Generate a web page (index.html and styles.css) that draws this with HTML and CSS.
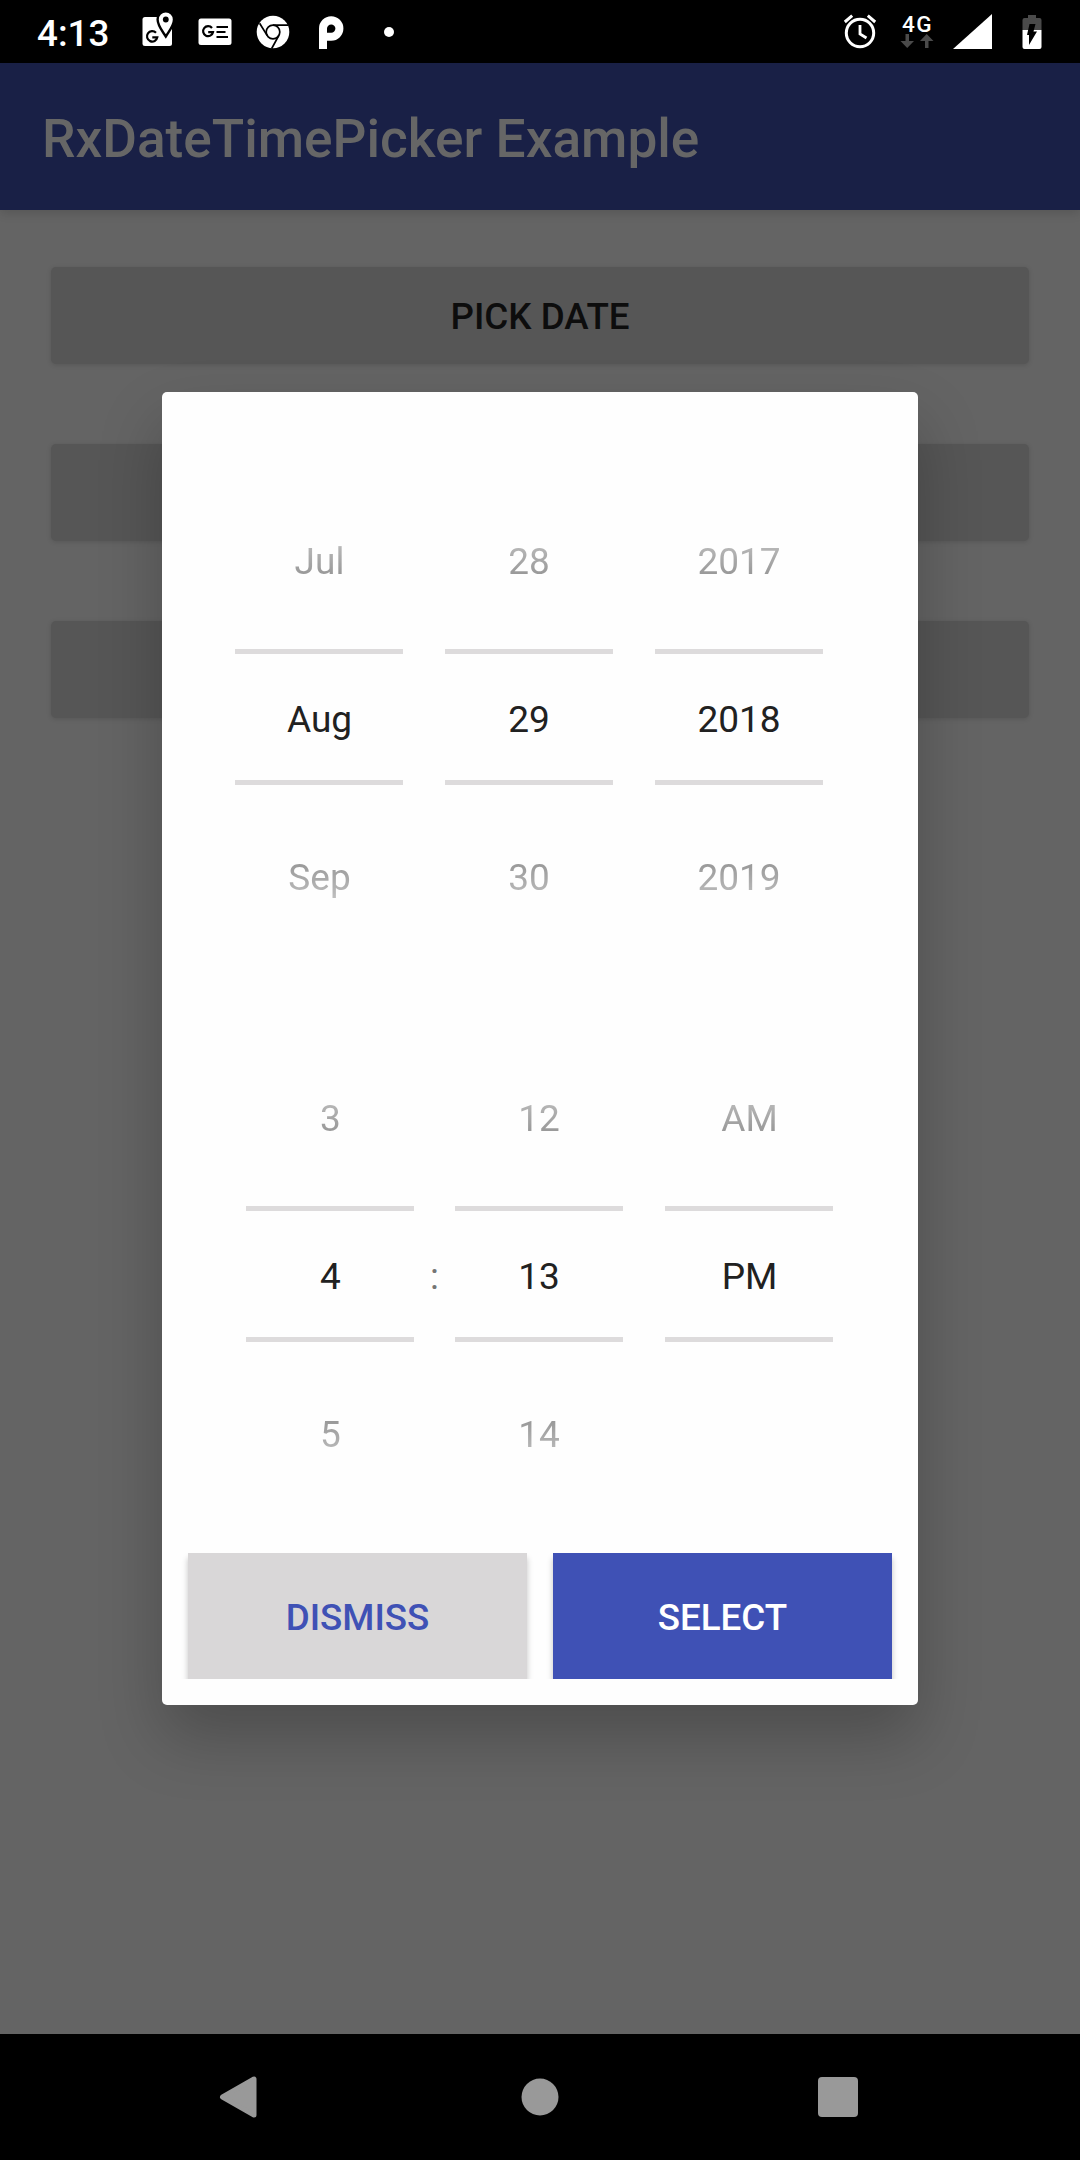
FILE: index.html
```html
<!DOCTYPE html>
<html lang="en">
<head>
<meta charset="utf-8">
<title>RxDateTimePicker Example</title>
<link rel="stylesheet" href="styles.css">
</head>
<body>
<div class="screen">
  <header class="status-bar">
    <span class="clock">4:13</span>
    <div class="notifications">
      <svg width="32" height="36" viewBox="141 11 32 36">
        <path fill="#fff" d="M145 17H172V43.500A2.500 2.500 0 0 1 169.500 46H145A2.500 2.500 0 0 1 142.500 43.500V19.500A2.500 2.500 0 0 1 145 17Z"/>
        <path fill="#fff" stroke="#000" stroke-width="2.400" d="M165.800 36.500C162 30.500 157.600 25.500 157.600 19.500A8.200 8.200 0 0 1 174 19.500C174 25.500 169.500 30.500 165.800 36.500Z"/>
        <circle cx="165.800" cy="19.500" r="2.900" fill="#000"/>
        <path fill="none" stroke="#000" stroke-width="2.200" d="M156 32.800A5.200 5.200 0 1 0 157.300 37.300H152.300"/>
      </svg>
      <svg width="34" height="28" viewBox="0 0 34 28">
        <rect x="0.500" y="0.500" width="33" height="26.500" rx="2.500" fill="#fff"/>
        <path fill="none" stroke="#000" stroke-width="2.200" d="M14 10A5 5 0 1 0 15 14.200H10.200M18.500 9H30M18.500 14H27.500M18.500 19H30"/>
      </svg>
      <svg width="34" height="34" viewBox="0 0 34 34">
        <circle cx="17" cy="17" r="16.300" fill="#fff"/>
        <g fill="none" stroke="#000" stroke-width="1.700">
          <circle cx="17" cy="17" r="6.800"/>
          <path d="M17 10.200H32M11.100 20.400L3.600 8.200M22.900 20.400L15.700 33.500"/>
        </g>
      </svg>
      <svg width="26" height="34" viewBox="0 0 26 34">
        <path fill="#fff" fill-rule="evenodd" d="M1 33V12.500A12.200 12.200 0 1 1 13.200 24.700H9V33ZM13.200 8.400A4.200 4.200 0 0 0 9 12.600V16.800H13.200A4.200 4.200 0 0 0 13.200 8.400Z"/>
      </svg>
      <svg width="10" height="10" viewBox="0 0 10 10"><circle cx="5" cy="5" r="5" fill="#fff"/></svg>
    </div>
    <div class="system">
      <svg width="34" height="36" viewBox="0 0 34 36" fill="none" stroke="#fff">
        <circle cx="17" cy="20" r="13.700" stroke-width="3"/>
        <path stroke-width="2.800" d="M17 12V21L23.500 25"/>
        <path stroke-width="3" d="M1.800 9L9.200 2.700M32.200 9L24.800 2.700"/>
      </svg>
      <div class="network">
        <span class="network-type">4G</span>
        <svg width="34" height="14" viewBox="0 0 34 14" fill="#4a4a4a">
          <path d="M5.500 0H9V7H14L7.200 14L.5 7H5.500Z"/>
          <path d="M25 14H28.500V7H33.500L26.700 0L20 7H25Z"/>
        </svg>
      </div>
      <svg class="signal" width="39" height="35" viewBox="0 0 39 35"><path fill="#fff" d="M0 35L39 0V35Z"/></svg>
      <svg width="20" height="34" viewBox="0 0 20 34">
        <path fill="#4a4a4a" d="M6 0H14V3H17.500A2 2 0 0 1 19.500 5V15H.5V5A2 2 0 0 1 2.500 3H6Z"/>
        <path fill="#fff" d="M.5 15H19.500V32A2 2 0 0 1 17.500 34H2.500A2 2 0 0 1 .5 32Z"/>
        <path fill="#000" d="M7.500 9H13.500L11.500 16.500H15L7 30V20H5Z"/>
      </svg>
    </div>
  </header>

  <div class="app-bar"><h1 class="app-title">RxDateTimePicker Example</h1></div>

  <main class="content">
    <button class="raised-button">PICK DATE</button>
    <button class="raised-button"></button>
    <button class="raised-button"></button>
  </main>

  <nav class="nav-bar">
    <svg width="38" height="44" viewBox="0 0 38 44"><path fill="#999" stroke="#999" stroke-width="5" stroke-linejoin="round" d="M35 4V40L3.500 22Z"/></svg>
    <svg class="home" width="38" height="38" viewBox="0 0 38 38"><circle cx="19" cy="19" r="18.500" fill="#999"/></svg>
    <svg width="40" height="40" viewBox="0 0 40 40"><rect width="40" height="40" rx="4" fill="#999"/></svg>
  </nav>

  <section class="dialog" role="dialog">
    <div class="pickers date">
      <div class="wheel"><span class="item before">Jul</span><span class="item selected">Aug</span><span class="item after">Sep</span></div>
      <div class="wheel centered"><span class="item before">28</span><span class="item selected">29</span><span class="item after">30</span></div>
      <div class="wheel centered"><span class="item before">2017</span><span class="item selected">2018</span><span class="item after">2019</span></div>
    </div>
    <div class="pickers time">
      <div class="wheel"><span class="item before">3</span><span class="item selected">4</span><span class="item after">5</span></div>
      <span class="colon">:</span>
      <div class="wheel centered"><span class="item before">12</span><span class="item selected">13</span><span class="item after">14</span></div>
      <div class="wheel meridiem"><span class="item before">AM</span><span class="item selected">PM</span></div>
    </div>
    <div class="actions">
      <button class="action dismiss">DISMISS</button>
      <button class="action select">SELECT</button>
    </div>
  </section>
</div>
</body>
</html>
```
FILE: styles.css
```css
* { box-sizing: border-box; }

body {
  margin: 0;
  font-family: Roboto, sans-serif;
}

svg { display: block; flex: none; overflow: visible; }

button {
  border: 0;
  padding: 0;
  font: 500 36.75px/1.2 Roboto, sans-serif;
}

.screen {
  position: relative;
  display: flex;
  flex-direction: column;
  width: 1080px;
  height: 2160px;
  overflow: hidden;
  background: #646464;
}

.status-bar {
  display: flex;
  align-items: center;
  height: 63px;
  padding: 0 38px 0 37px;
  background: #000;
  color: #fff;
}

.clock {
  width: 104px;
  padding-top: 4px;
  font-size: 36.75px;
  font-weight: 500;
}

.notifications { display: flex; align-items: center; }
.notifications svg:nth-child(1) { margin-bottom: 5px; }
.notifications svg:nth-child(2) { margin-left: 25px; }
.notifications svg:nth-child(3) { margin-left: 24px; }
.notifications svg:nth-child(4) { margin: 2px 0 0 28px; }
.notifications svg:nth-child(5) { margin-left: 40px; }

.system { display: flex; align-items: center; margin-left: auto; }
.system > svg:first-child { margin-bottom: 2px; }

.network { width: 34px; margin-left: 23px; }
.network-type {
  display: block;
  padding-left: 2px;
  font-size: 22.5px;
  font-weight: 500;
  line-height: 19px;
  letter-spacing: 1.5px;
}
.signal { margin-left: 19px; }
.signal + svg { margin-left: 30px; }

.app-bar {
  display: flex;
  align-items: center;
  height: 147px;
  padding: 4px 0 0 42px;
  background: #192046;
  box-shadow: 0 3px 10px rgba(0, 0, 0, .14);
}

.app-title {
  margin: 0;
  color: #666;
  font-size: 53.2px;
  font-weight: 500;
}

.content {
  display: flex;
  flex: 1;
  flex-direction: column;
  gap: 80px;
  padding: 57px 51px 0;
}

.raised-button {
  height: 97px;
  padding-top: 4px;
  border-radius: 5px;
  background: #565656;
  color: #0d0d0d;
  box-shadow: 0 1px 5px rgba(0, 0, 0, .14);
}

.nav-bar {
  display: flex;
  align-items: center;
  justify-content: space-between;
  height: 126px;
  padding: 0 222px 0 219px;
  background: #000;
}

.home { margin-left: 4px; }

.dialog {
  position: absolute;
  top: 392px;
  left: 162px;
  width: 756px;
  height: 1313px;
  padding-top: 90px;
  border-radius: 5px;
  background: #fefefe;
  box-shadow: 0 32px 64px rgba(0, 0, 0, .23);
}

.pickers { display: flex; height: 474px; }
.date { gap: 42px; margin: 0 0 83px 73px; }
.time { margin: 0 0 40px 84px; }

.wheel {
  display: grid;
  grid-template-rows: repeat(3, 158px);
  width: 168px;
  text-align: center;
}

.meridiem { margin-left: 42px; }

.item {
  padding-left: 1px;
  color: #212121;
  font-size: 37px;
  line-height: 160px;
}

.centered .item { padding-left: 0; }

/* Items fade out towards the outer edges of the wheel */
.before { -webkit-mask-image: linear-gradient(transparent, rgba(0, 0, 0, .78)); mask-image: linear-gradient(transparent, rgba(0, 0, 0, .78)); }
.after { -webkit-mask-image: linear-gradient(rgba(0, 0, 0, .78), transparent); mask-image: linear-gradient(rgba(0, 0, 0, .78), transparent); }

.selected {
  height: 136px;
  margin-top: 9px;
  padding-top: 2px;
  border: solid #dddbdc;
  border-width: 5px 0;
  line-height: 128px;
}

.colon {
  width: 41px;
  color: #757575;
  font-size: 36.75px;
  line-height: 476px;
  text-align: center;
}

.actions {
  display: flex;
  gap: 26px;
  height: 126px;
  padding: 0 26px;
  overflow: hidden;
}

.action {
  flex: 1;
  padding-top: 5px;
  box-shadow: 0 5px 6px rgba(0, 0, 0, .24);
}
.dismiss { background: #d9d7d8; color: #3f51b5; }
.select { background: #3f51b5; color: #fff; }
```
